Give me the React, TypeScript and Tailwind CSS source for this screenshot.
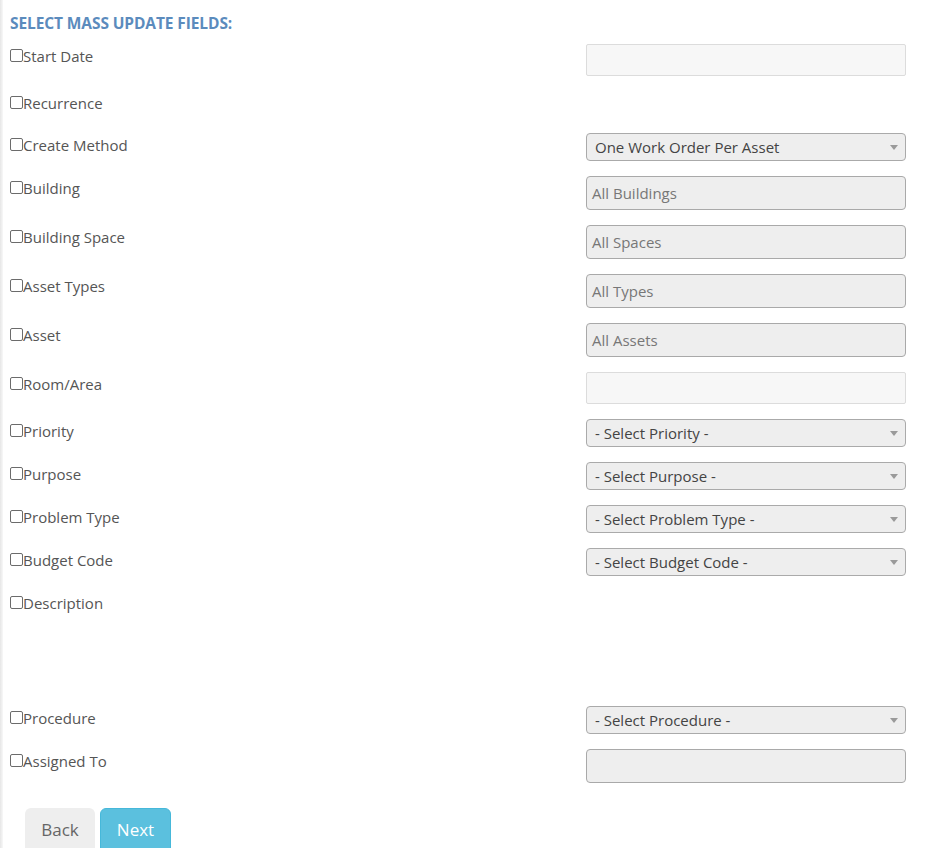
import React from "react";

type Row = {
  label: string;
  kind: "none" | "light" | "input" | "select" | "space";
  text?: string;
};

const rows: Row[] = [
  { label: "Start Date", kind: "light" },
  { label: "Recurrence", kind: "none" },
  { label: "Create Method", kind: "select", text: "One Work Order Per Asset" },
  { label: "Building", kind: "input", text: "All Buildings" },
  { label: "Building Space", kind: "input", text: "All Spaces" },
  { label: "Asset Types", kind: "input", text: "All Types" },
  { label: "Asset", kind: "input", text: "All Assets" },
  { label: "Room/Area", kind: "light" },
  { label: "Priority", kind: "select", text: "- Select Priority -" },
  { label: "Purpose", kind: "select", text: "- Select Purpose -" },
  { label: "Problem Type", kind: "select", text: "- Select Problem Type -" },
  { label: "Budget Code", kind: "select", text: "- Select Budget Code -" },
  { label: "Description", kind: "space" },
  { label: "Procedure", kind: "select", text: "- Select Procedure -" },
  { label: "Assigned To", kind: "input", text: "" },
];

function Control({ row }: { row: Row }) {
  if (row.kind === "light") {
    return <div className="w-[320px] h-[32px] bg-[#f7f7f7] border border-[#dcdcdc] rounded-[2px]" />;
  }
  if (row.kind === "input") {
    return (
      <div className="w-[320px] h-[34px] bg-[#eeeeee] border border-[#a9a9a9] rounded-[4px] flex items-center pl-[5px] text-[15px] text-[#777777]">
        {row.text}
      </div>
    );
  }
  if (row.kind === "select") {
    return (
      <div className="w-[320px] h-[28px] bg-[#eeeeee] border border-[#aaaaaa] rounded-[4px] flex items-center pl-[8px] pr-[6px] text-[15px] text-[#444444]">
        <span className="flex-1">{row.text}</span>
        <svg width="8" height="5" viewBox="0 0 8 5" className="mr-[1px]">
          <polygon points="0,0 8,0 4,5" fill="#9a9a9a" />
        </svg>
      </div>
    );
  }
  return null;
}

export default function App() {
  return (
    <div
      className="min-h-[848px] w-full bg-white flex"
      style={{ fontFamily: '"Open Sans", "Noto Sans", Arial, sans-serif' }}
    >
      <div className="w-[3px] bg-gradient-to-r from-[#e6e6e6] to-[#f8f8f8] shrink-0" />
      <div className="flex-1 pl-[7px]">
        <div className="pt-[12px] h-[44px] text-[15.5px] font-bold text-[#5b8bbd] tracking-[-0.1px]">
          SELECT MASS UPDATE FIELDS:
        </div>
        <div className="flex flex-col gap-[15px]">
          {rows.map((r) => {
            const h =
              r.kind === "none" ? 27 : r.kind === "space" ? 100 : undefined;
            return (
              <div key={r.label} className="flex" style={h ? { height: h } : undefined}>
                <label className="w-[576px] flex items-start pt-[1px] text-[15px] leading-[22px] text-[#555555]">
                  <span className="mt-[4px] w-[13px] h-[13px] border border-[#6b6b6b] rounded-[2px] bg-white shrink-0" />
                  <span>{r.label}</span>
                </label>
                <Control row={r} />
              </div>
            );
          })}
        </div>
        <div className="flex gap-[5px] mt-[25px] pl-[15px]">
          <button className="w-[70px] h-[46px] rounded-[6px] bg-[#eeeeee] text-[#666666] text-[17px] pb-[2px]">
            Back
          </button>
          <button className="w-[71px] h-[46px] rounded-[6px] bg-[#5bc0de] border border-[#46b8da] text-white text-[17px] pb-[2px]">
            Next
          </button>
        </div>
      </div>
    </div>
  );
}
